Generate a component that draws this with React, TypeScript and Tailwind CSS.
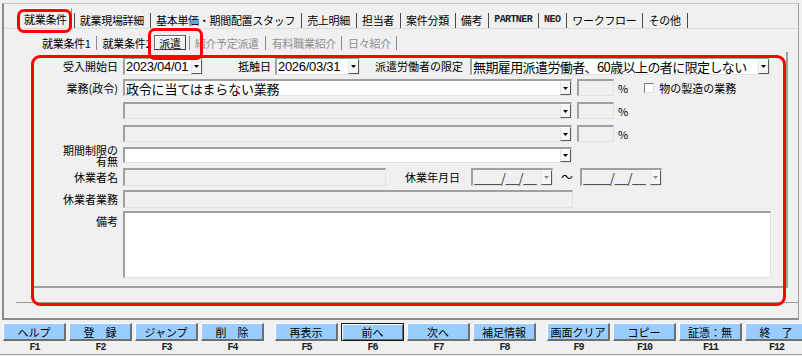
import React from "react";

const FONT = "font-['Noto_Sans_CJK_JP','Noto_Sans',sans-serif]";
const SUNK =
  "border-t-2 border-l-2 border-r border-b border-t-[#a0a0a0] border-l-[#a0a0a0] border-r-[#e2e2e2] border-b-[#e2e2e2]";

function Arrow({ grey }: { grey?: boolean }) {
  return (
    <svg width="5" height="3" viewBox="0 0 5 3">
      <path d="M0 0H5L2.5 3Z" fill={grey ? "#8a8a8a" : "#000"} />
    </svg>
  );
}

function DropBtn({ grey }: { grey?: boolean }) {
  return (
    <div className="w-[11px] h-full shrink-0 flex items-center justify-center bg-[#f6f6f6] border-l border-t border-l-[#e6e6e6] border-t-white border-r border-b border-r-[#5a5a5a] border-b-[#5a5a5a]">
      <Arrow grey={grey} />
    </div>
  );
}

function Combo({
  w,
  value,
  white,
  greyArrow,
  textClass,
}: {
  w: string;
  value?: string;
  white?: boolean;
  greyArrow?: boolean;
  textClass?: string;
}) {
  return (
    <div className={`${w} h-full shrink-0 flex ${SUNK} ${white ? "bg-white" : "bg-[#f0f0f0]"}`}>
      <div
        className={`flex-1 flex items-center pl-[1px] text-[13px] leading-[15px] whitespace-nowrap ${textClass ?? ""}`}
      >
        {value}
      </div>
      <DropBtn grey={greyArrow} />
    </div>
  );
}

function Box({ w, white, h }: { w: string; white?: boolean; h?: string }) {
  return <div className={`${w} ${h ?? "h-full"} shrink-0 ${SUNK} ${white ? "bg-white" : "bg-[#f0f0f0]"}`} />;
}

function Label({ children }: { children: React.ReactNode }) {
  return (
    <div className="w-[85px] shrink-0 mr-[5px] text-right text-[11px] leading-[14px] whitespace-nowrap">
      {children}
    </div>
  );
}

function MainSep() {
  return <div className="w-px h-[15px] bg-[#4a4a4a] shrink-0" />;
}

function SubSep() {
  return <div className="w-px h-[14px] bg-[#8c8c8c] shrink-0" />;
}

const mainTabs: { t: string; latin?: boolean }[] = [
  { t: "就業現場詳細" },
  { t: "基本単価・期間配置スタッフ" },
  { t: "売上明細" },
  { t: "担当者" },
  { t: "案件分類" },
  { t: "備考" },
  { t: "PARTNER", latin: true },
  { t: "NEO", latin: true },
  { t: "ワークフロー" },
  { t: "その他" },
];

const buttons: { label: string; key: string; focus?: boolean }[][] = [
  [
    { label: "ヘルプ", key: "F1" },
    { label: "登　録", key: "F2" },
    { label: "ジャンプ", key: "F3" },
    { label: "削　除", key: "F4" },
  ],
  [
    { label: "再表示", key: "F5" },
    { label: "前へ", key: "F6", focus: true },
    { label: "次へ", key: "F7" },
    { label: "補足情報", key: "F8" },
  ],
  [
    { label: "画面クリア", key: "F9" },
    { label: "コピー", key: "F10" },
    { label: "証憑：無", key: "F11" },
    { label: "終　了", key: "F12" },
  ],
];

const DATE_TXT = "font-['Liberation_Sans',sans-serif] tracking-[-0.3px]";

export default function App() {
  return (
    <div className={`relative w-[802px] h-[356px] overflow-hidden bg-[#f0f0f0] text-black ${FONT}`}>
      {/* frame */}
      <div className="mt-[3px] ml-[2px] w-[797px] h-[317px] border-t border-l-2 border-r border-b-2 border-t-[#c4c4c4] border-l-[#8a8a8a] border-r-[#a0a0a0] border-b-[#8a8a8a] flex flex-col">
        {/* main tabs */}
        <div className="h-[24px] shrink-0 flex items-end text-[11px] leading-[14px] tracking-[-0.3px]">
          <div className="ml-[15px] h-[20px] px-[4px] flex items-center border-t border-l border-r border-t-white border-l-white border-r-[#8a8a8a]">
            就業条件
          </div>
          <div className="ml-[2px]">
            <MainSep />
          </div>
          {mainTabs.map((tab) => (
            <React.Fragment key={tab.t}>
              <span
                className={`ml-[5px] mr-[6px] pb-[1px] whitespace-nowrap ${
                  tab.latin ? "font-['Liberation_Mono',monospace] font-bold text-[10px] tracking-[-0.6px] text-[#222]" : ""
                }`}
              >
                {tab.t}
              </span>
              <MainSep />
            </React.Fragment>
          ))}
        </div>
        <div className="h-px shrink-0 bg-[#dcdcdc]" />
        {/* sub tabs */}
        <div className="h-[23px] shrink-0 flex items-end pb-[2px] text-[11px] leading-[14px] tracking-[-0.3px]">
          <span className="ml-[38px] whitespace-nowrap">就業条件1</span>
          <div className="ml-[5px]">
            <SubSep />
          </div>
          <span className="ml-[6px] whitespace-nowrap">就業条件2</span>
          <div className="ml-[3px] h-[15px] px-[4px] flex items-center border border-t-[#6a6a6a] border-l-[#6a6a6a] border-r-[#3a3a3a] border-b-[#3a3a3a] shadow-[inset_1px_1px_0_#fff]">
            派遣
          </div>
          <div className="ml-[3px]">
            <SubSep />
          </div>
          <span className="ml-[5px] text-[#8e8e8e] whitespace-nowrap">紹介予定派遣</span>
          <div className="ml-[6px]">
            <SubSep />
          </div>
          <span className="ml-[6px] text-[#8e8e8e] whitespace-nowrap">有料職業紹介</span>
          <div className="ml-[5px]">
            <SubSep />
          </div>
          <span className="ml-[6px] text-[#8e8e8e] whitespace-nowrap">日々紹介</span>
          <div className="ml-[5px]">
            <SubSep />
          </div>
        </div>
        {/* sub page */}
        <div className="ml-[12px] h-[251px] shrink-0 border-b border-[#9a9a9a]">
          <div className="ml-[17px] w-[755px] h-[236px] border-r-2 border-b-2 border-[#a0a0a0] pt-[5px] flex flex-col">
            {/* row 1 */}
            <div className="h-[18px] flex items-center">
              <Label>受入開始日</Label>
              <Combo w="w-[80px]" value="2023/04/01" white textClass={DATE_TXT} />
              <div className="ml-[35px] mr-[4px] text-[11px] leading-[14px] whitespace-nowrap">抵触日</div>
              <Combo w="w-[85px]" value="2026/03/31" white textClass={DATE_TXT} />
              <div className="ml-[15px] mr-[7px] text-[11px] leading-[14px] whitespace-nowrap">派遣労働者の限定</div>
              <Combo
                w="w-[300px]"
                value="無期雇用派遣労働者、60歳以上の者に限定しない"
                white
                textClass="tracking-[-0.6px]"
              />
            </div>
            {/* row 2 */}
            <div className="h-[17px] mt-[4px] flex items-center">
              <Label>業務(政令)</Label>
              <Combo w="w-[449px]" value="政令に当てはまらない業務" white textClass="tracking-[-0.2px]" />
              <div className="ml-[5px] h-full">
                <Box w="w-[37px]" />
              </div>
              <span className="ml-[4px] text-[11px] leading-[14px]">%</span>
              <div className="ml-[16px] w-[10px] h-[10px] bg-white border-t border-l border-t-[#7a7a7a] border-l-[#7a7a7a] border-r border-b border-r-[#dcdcdc] border-b-[#dcdcdc]" />
              <span className="ml-[5px] text-[11px] leading-[14px] whitespace-nowrap">物の製造の業務</span>
            </div>
            {/* row 3 */}
            <div className="h-[17px] mt-[6px] flex items-center">
              <Label>{""}</Label>
              <Combo w="w-[449px]" />
              <div className="ml-[5px] h-full">
                <Box w="w-[37px]" />
              </div>
              <span className="ml-[4px] text-[11px] leading-[14px]">%</span>
            </div>
            {/* row 4 */}
            <div className="h-[17px] mt-[6px] flex items-center">
              <Label>{""}</Label>
              <Combo w="w-[449px]" />
              <div className="ml-[5px] h-full">
                <Box w="w-[37px]" />
              </div>
              <span className="ml-[4px] text-[11px] leading-[14px]">%</span>
            </div>
            {/* row 5 */}
            <div className="h-[16px] mt-[5px] flex items-start">
              <div className="w-[85px] shrink-0 mr-[5px] flex flex-col items-end text-[11px] leading-[11px] mt-[-2px] whitespace-nowrap">
                <span>期間制限の</span>
                <span>有無</span>
              </div>
              <Combo w="w-[449px]" white />
            </div>
            {/* row 6 */}
            <div className="h-[18px] mt-[5px] flex items-center">
              <Label>休業者名</Label>
              <Box w="w-[263px]" />
              <div className="ml-[19px] mr-[11px] text-[11px] leading-[14px] whitespace-nowrap">休業年月日</div>
              <Combo w="w-[82px]" value="____/__/__" greyArrow textClass="text-[#333] tracking-[-0.6px]" />
              <span className="ml-[8px] mr-[7px] text-[12px] leading-[14px]">〜</span>
              <Combo w="w-[82px]" value="____/__/__" greyArrow textClass="text-[#333] tracking-[-0.6px]" />
            </div>
            {/* row 7 */}
            <div className="h-[18px] mt-[4px] flex items-center">
              <Label>休業者業務</Label>
              <Box w="w-[450px]" />
            </div>
            {/* row 8 */}
            <div className="h-[67px] mt-[3px] flex items-start">
              <div className="w-[85px] shrink-0 mr-[5px] text-right text-[11px] leading-[14px] mt-[3px]">備考</div>
              <Box w="w-[648px]" white />
            </div>
          </div>
        </div>
      </div>

      {/* buttons */}
      <div className="mt-[3px] pl-[3px] flex gap-[11px]">
        {buttons.map((group, gi) => (
          <div key={gi} className="flex gap-[3px]">
            {group.map((b) => (
              <div key={b.key} className="w-[63px] shrink-0 flex flex-col items-center">
                <div
                  className={`w-[63px] h-[18px] flex items-center justify-center bg-[#99ccff] text-[11px] leading-[14px] whitespace-nowrap ${
                    b.focus
                      ? "border border-[#1a1a1a] shadow-[inset_1px_1px_0_#fff,inset_-1px_-1px_0_#6a6a6a]"
                      : "border-t border-l border-t-white border-l-white border-r-2 border-b-2 border-r-[#6f6f6f] border-b-[#6f6f6f]"
                  }`}
                >
                  {b.label}
                </div>
                <div className="mt-[2px] h-[10px] text-[10px] leading-[10px] font-bold text-[#222] font-['Liberation_Mono',monospace] tracking-[-1px]">
                  {b.key}
                </div>
              </div>
            ))}
          </div>
        ))}
      </div>
      <div className="absolute left-0 right-0 top-[354px] h-px bg-[#a0a0a0]" />

      {/* red annotations */}
      <div className="absolute left-[17px] top-[9px] w-[55px] h-[24px] border-[3px] border-[#ff0000] rounded-[7px] pointer-events-none" />
      <div className="absolute left-[148px] top-[28px] w-[55px] h-[32px] border-[3px] border-[#ff0000] rounded-[7px] pointer-events-none" />
      <div className="absolute left-[31px] top-[55px] w-[755px] h-[251px] border-[3px] border-[#ff0000] rounded-[9px] pointer-events-none" />
    </div>
  );
}
